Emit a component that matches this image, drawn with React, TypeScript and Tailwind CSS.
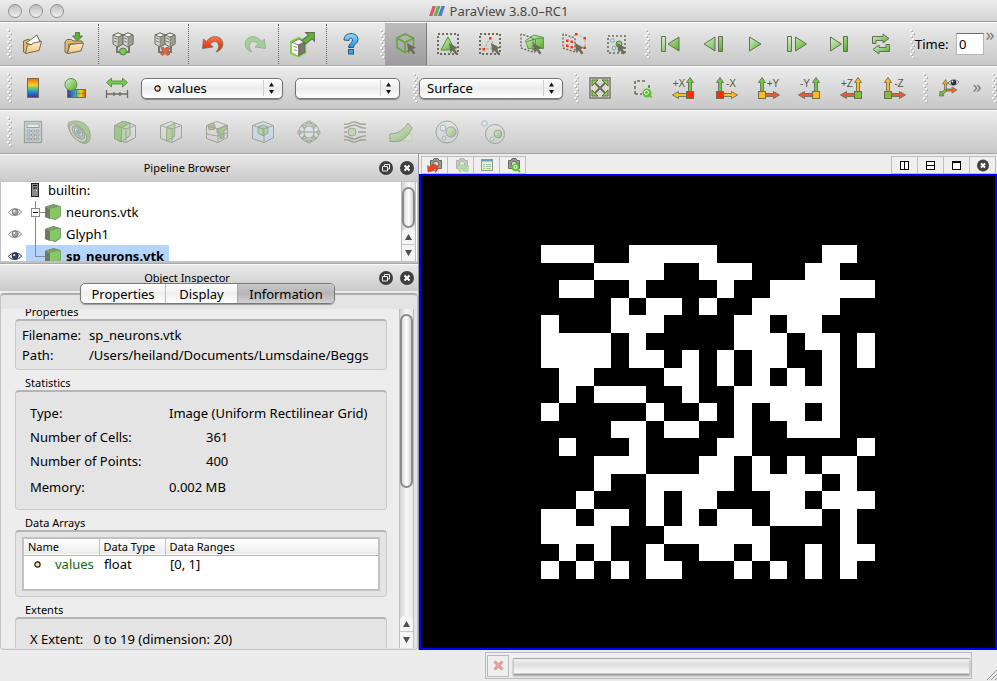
import React from "react";

const OUT = "#6b6d58";

/* ---------- shared building blocks ---------- */

type IconProps = { children: React.ReactNode; className?: string };

function Icon({ children, className = "h-6 w-6" }: IconProps) {
  return (
    <svg viewBox="0 0 24 24" className={className} fill="none" stroke={OUT} strokeWidth="1" aria-hidden="true">
      {children}
    </svg>
  );
}

function ToolButton({
  label,
  children,
  active = false,
  faded = false,
}: {
  label: string;
  children: React.ReactNode;
  active?: boolean;
  faded?: boolean;
}) {
  return (
    <button
      type="button"
      aria-label={label}
      aria-pressed={active || undefined}
      className={
        "flex h-full w-[42px] shrink-0 items-center justify-center " +
        (active ? "border-r border-[#7d7d7d] bg-linear-to-b from-[#bdbdbd] to-[#9d9d9d]" : "")
      }
    >
      <span className={faded ? "opacity-50" : ""}>{children}</span>
    </button>
  );
}

function Grip() {
  return (
    <span className="flex h-full w-[13px] shrink-0 items-center justify-end">
      <svg viewBox="0 0 6 30" className="h-[30px] w-[6px]" aria-hidden="true">
        {Array.from({ length: 10 }, (_, i) => {
          const x = i % 2 === 0 ? 1 : 3;
          return (
            <g key={i}>
              <rect x={x + 1} y={i * 3 + 1} width="2" height="2" fill="#b4b4b4" />
              <rect x={x} y={i * 3} width="2" height="2" fill="#f6f6f6" />
            </g>
          );
        })}
      </svg>
    </span>
  );
}

function Separator() {
  return (
    <span className="flex h-full w-[6px] shrink-0 py-px pl-[2px]">
      <span className="h-full border-l border-dotted border-[#666]" />
    </span>
  );
}

function Toolbar({ children }: { children: React.ReactNode }) {
  return (
    <div
      role="toolbar"
      className="flex h-11 shrink-0 items-center overflow-hidden border-t border-b border-t-white border-b-[#a5a5a5] bg-linear-to-b from-[#ebebeb] to-[#c8c8c8]"
    >
      {children}
    </div>
  );
}

function Popup({
  label,
  options,
  width,
  point = false,
}: {
  label: string;
  options: string[];
  width: string;
  point?: boolean;
}) {
  return (
    <div className={"relative h-[21px] shrink-0 " + width}>
      <select
        aria-label={label}
        className={
          "block h-[21px] w-full appearance-none rounded-[5px] border border-[#747474] bg-linear-to-b from-white via-[#ececec] to-white py-0 pr-6 text-[13px] leading-[19px] text-black shadow-[0_1px_1px_rgba(0,0,0,0.35)] " +
          (point ? "pl-[26px]" : "pl-[7px]")
        }
      >
        {options.map((o) => (
          <option key={o}>{o}</option>
        ))}
      </select>
      <svg viewBox="0 0 20 20" className="pointer-events-none absolute top-0 right-0 h-5 w-5" aria-hidden="true">
        <path d="M0.500 2v16" stroke="#d0d0d0" />
        <path d="M6 8.500L8.500 4.500L11 8.500zM6 12L8.500 16L11 12z" fill="#111" />
      </svg>
      {point && (
        <svg viewBox="0 0 8 8" className="pointer-events-none absolute top-[7px] left-[13px] h-[7px] w-[7px]" aria-hidden="true">
          <circle cx="4" cy="4" r="3" fill="#fbd9a8" stroke="#111" strokeWidth="1.300" />
        </svg>
      )}
    </div>
  );
}

/* ---------- icon parts ---------- */

function Pointer() {
  return <path d="M13 11L22 16L18.500 17L21.500 21L19.500 22.500L16.500 18.500L14.500 21.500Z" fill={OUT} stroke="none" />;
}

function DashedBox() {
  return <rect x="2" y="2" width="20" height="20" stroke={OUT} strokeWidth="2" strokeDasharray="2 2" />;
}

function Folder() {
  return (
    <>
      <path d="M2 10V20L4.500 21.500L6 12H19V9L10 9L8.500 7.500H4Z" fill="#e9b765" />
      <path d="M4.500 21.500L7 12.500L20.500 11L18 19Z" fill="url(#folder)" />
    </>
  );
}

function Server({ x }: { x: number }) {
  return (
    <g>
      <path d={`M${x} 3L${x + 5} 1L${x + 10} 3V12L${x + 5} 15L${x} 12Z`} fill="#d8d8d4" />
      <path d={`M${x} 3L${x + 5} 5L${x + 10} 3L${x + 5} 1Z`} fill="#fafafa" />
      <path d={`M${x + 5} 5L${x + 10} 3V12L${x + 5} 15Z`} fill="#9c9c92" strokeWidth="0.600" />
      <path d={`M${x + 1} 6l3 1.200M${x + 1} 9l3 1.200`} stroke="#777" />
    </g>
  );
}

function ServerPair({ children }: { children: React.ReactNode }) {
  return (
    <Icon>
      <path d="M6 14V20H18V14" stroke="#77776c" strokeWidth="2" />
      <Server x={2} />
      <Server x={12} />
      {children}
    </Icon>
  );
}

/* Wire-frame box seen from above; filters draw their own solid inside it. */
function WireCube({ fill = "none", children }: { fill?: string; children?: React.ReactNode }) {
  return (
    <Icon>
      <path d="M1.500 5.500L12 1.500L22.500 5.500V17.500L13 22.500L1.500 18.500Z" fill={fill} />
      {children}
      <path d="M1.500 5.500L13 9L22.500 5.500M13 9V22.500" />
    </Icon>
  );
}

type Axis = { sign: string; right: boolean; up: string; side: string; box: string };

function AxisIcon({ sign, right, up, side, box }: Axis) {
  const arrows = (
    <>
      <path d="M16.500 16V6.500H14.500L18 1.500L21.500 6.500H19.500V16Z" fill={up} strokeWidth="0.900" />
      <path d="M15 17.500H6.500V15.500L0.500 19L6.500 22.500V20.500H15Z" fill={side} strokeWidth="0.900" />
      <rect x="14.500" y="15.500" width="7" height="7" fill={box} />
    </>
  );
  return (
    <Icon>
      {right ? <g transform="translate(24 0) scale(-1 1)">{arrows}</g> : arrows}
      <text
        x={right ? 17 : 7}
        y="11"
        textAnchor="middle"
        fontSize="10"
        fill="#555546"
        stroke="none"
        fontFamily="Liberation Sans, Noto Sans, sans-serif"
      >
        {sign}
      </text>
    </Icon>
  );
}

const G = "#72c846";
const Y = "#fdbe1c";
const R = "#f9562f";

const axes: Axis[] = [
  { sign: "+X", right: false, up: G, side: Y, box: "#ff2c00" },
  { sign: "-X", right: true, up: G, side: Y, box: "#ff2c00" },
  { sign: "+Y", right: true, up: G, side: R, box: "#fdbe1c" },
  { sign: "-Y", right: false, up: G, side: R, box: "#fdbe1c" },
  { sign: "+Z", right: false, up: Y, side: R, box: "#82bd3b" },
  { sign: "-Z", right: true, up: Y, side: R, box: "#82bd3b" },
];

function Undo({ fill, flip = false }: { fill: string; flip?: boolean }) {
  return (
    <Icon>
      <g transform={flip ? "translate(24 0) scale(-1 1)" : undefined}>
        <path
          d="M2.500 7L1.500 16.500L12 15L9 12.500C11 9 15.500 8.500 17 11.500C18.500 14.500 17.500 17.500 15 20C20 18.500 23 14.500 21.500 9.500C19.500 3.500 10 2.500 5.500 9.500Z"
          fill={fill}
          strokeWidth="0.800"
        />
      </g>
    </Icon>
  );
}

function Eye({ dim = false }: { dim?: boolean }) {
  return (
    <svg viewBox="0 0 14 12" className={dim ? "h-3 w-[14px] opacity-60" : "h-3 w-[14px]"} fill="none" aria-hidden="true">
      <path d="M0.500 6.500C3 2 10.500 1.500 13.500 6C10.500 10.500 3.500 10.500 0.500 6.500Z" fill="#eee" stroke="#333" />
      <circle cx="7.200" cy="5.800" r="3" fill={dim ? "#666" : "#234a86"} stroke="#222" />
      <circle cx="6.200" cy="5" r="1" fill="#fff" />
    </svg>
  );
}

function SourceCube() {
  return (
    <svg viewBox="0 0 16 16" className="h-4 w-4 shrink-0" aria-hidden="true">
      <path d="M0.500 3L8.500 0.500L15.500 2.500V12L10.500 15.500L0.500 13Z" fill="#86c766" stroke="#55734a" strokeWidth="0.800" />
      <path d="M0.500 3L5 5V15L0.500 13Z" fill="#6f7a60" />
      <path d="M0.500 3L8.500 0.500L15.500 2.500L5 5Z" fill="#7d9c69" />
      <path d="M5 5L15.500 2.500V12L5 15Z" fill="#86c766" />
    </svg>
  );
}

/* ---------- toolbars ---------- */

function MainToolbar() {
  return (
    <Toolbar>
      <span className="-ml-px flex h-full">
        <Grip />
      </span>
      <ToolButton label="Open">
        <Icon>
          <path d="M2.500 9V20L4.500 21.500L19 11V8L9 9L7.500 7Z" fill="#e9b765" />
          <path d="M5 11L16 3L19 10L18 15Z" fill="#fff" />
          <path d="M4.500 21.500L6.500 13L11 12.500L12 11L20.500 9.500L18 18.500Z" fill="url(#folder)" />
        </Icon>
      </ToolButton>
      <ToolButton label="Save data">
        <Icon>
          <Folder />
          <path d="M12.500 0.500H16.500V4H19.500L14.500 9L9.500 4H12.500Z" fill="#58b52e" />
        </Icon>
      </ToolButton>
      <Separator />
      <ToolButton label="Connect">
        <ServerPair>
          <circle cx="12" cy="19.500" r="3.500" fill="#6fd04c" />
        </ServerPair>
      </ToolButton>
      <ToolButton label="Disconnect">
        <ServerPair>
          <path d="M8 16L10 15L12 17.500L14 15L17 16.500L14.500 19.500L17 22L14.500 23.500L12 21.500L9.500 23.500L7.500 22L10 19.500Z" fill="#f45b40" strokeWidth="0.800" />
        </ServerPair>
      </ToolButton>
      <Separator />
      <ToolButton label="Undo">
        <Undo fill="url(#red)" />
      </ToolButton>
      <ToolButton label="Redo" faded>
        <Undo fill="#6dc65a" flip />
      </ToolButton>
      <Separator />
      <ToolButton label="Export scene">
        <Icon className="h-[26px] w-[26px]">
          <path d="M1 10L8 6.500L14 9.500V20L8 23.500L1 20.500Z" fill="#dcdcd6" stroke="#7fd04a" strokeWidth="2" />
          <path d="M2 10.500L8 13V22.500L2 19.500Z" fill="#fff" stroke="none" />
          <path d="M2 10.500L8 7.500L13.500 10L8 13Z" fill="#f2f2ee" strokeWidth="0.800" />
          <path d="M8 13L13.500 10.500V19.500L8 22.500Z" fill="#77776d" />
          <path d="M3.500 14l3 1.200M3.500 17l3 1.200" stroke="#999" />
          <path d="M11 8.500L17 4L14.500 1.500H22.500V9.500L20.500 7L14.500 12Z" fill="#5cb82f" />
        </Icon>
      </ToolButton>
      <Separator />
      <ToolButton label="Help">
        <Icon>
          <path d="M5 8C5 4 8 1.500 12 1.500C16 1.500 19 4 19 7.500C19 11.500 14.500 12 14.500 15.500H9.500C9.500 11.500 13.500 11 13.500 8C13.500 5.500 10 5.500 10 8.500Z" fill="url(#blue)" stroke="#33566f" />
          <rect x="9.500" y="17.500" width="5" height="4.500" fill="#29a8ee" stroke="#33566f" />
        </Icon>
      </ToolButton>
      <Grip />
      <ToolButton label="Interact" active>
        <Icon>
          <path d="M11 2L19.500 6V15.500L11 20.500L3 15.500V6ZM3 6L11 10.500L19.500 6M11 10.500V20" stroke="#62a73b" strokeWidth="1.600" />
          <Pointer />
        </Icon>
      </ToolButton>
      <ToolButton label="Select cells on">
        <Icon>
          <DashedBox />
          <path d="M12 5L19 18H5Z" fill="url(#green)" stroke="#5a8f41" />
          <Pointer />
        </Icon>
      </ToolButton>
      <ToolButton label="Select points on">
        <Icon>
          <DashedBox />
          <path d="M12 6L18 17H6Z" strokeDasharray="2 2" stroke="#7ba563" />
          <path d="M11 5h2.500v2.500h-2.500zM4.500 16h2.500v2.500h-2.500zM17 16h2.500v2.500h-2.500z" fill="#ff3210" stroke="none" />
          <Pointer />
        </Icon>
      </ToolButton>
      <ToolButton label="Select cells through">
        <Icon>
          <path d="M5.500 8.500L14 3L23.500 5.500V16.500L8 16.500Z" fill="url(#green)" stroke="#4d8a3a" strokeWidth="0.800" />
          <path d="M6 10L15.500 7L23 6M15.500 7V16.500" stroke="#4d8a3a" strokeWidth="0.800" />
          <path d="M1 2V16L13 20V6L1 2" strokeWidth="1.400" strokeDasharray="2 1.500" />
          <Pointer />
        </Icon>
      </ToolButton>
      <ToolButton label="Select points through">
        <Icon>
          <path d="M1 2V16L13 20V6L1 2" strokeWidth="1.400" strokeDasharray="2 1.500" />
          <path d="M14 2L23 6V17M5 9L14 2M5 15L14 14" strokeDasharray="2 2" stroke="#8d8d80" strokeWidth="0.700" />
          <path d="M13 1h2.500v2.500h-2.500zM21.500 5h2.500v2.500h-2.500zM21.500 14.500h2.500v2.500h-2.500zM4 7.500h2.500v2.500h-2.500zM4 12.500h2.500v2.500h-2.500zM8.500 8.500h2.500v2.500h-2.500zM8.500 14h2.500v2.500h-2.500z" fill="#ff3210" stroke="none" />
          <Pointer />
        </Icon>
      </ToolButton>
      <ToolButton label="Select block">
        <Icon>
          <rect x="4" y="4" width="17" height="17" strokeWidth="1.600" strokeDasharray="2 2" />
          <circle cx="8.500" cy="8.500" r="1.800" fill="#d9ebf5" stroke="#7f9dac" />
          <circle cx="10" cy="16" r="1.800" fill="#d9ebf5" stroke="#7f9dac" />
          <circle cx="15" cy="12" r="3" fill="#8ed373" stroke="#4d8a3a" />
          <Pointer />
        </Icon>
      </ToolButton>
      <Grip />
      <ToolButton label="First frame">
        <Icon>
          <path d="M2.500 4.500h4v15h-4zM20 5V19L9 12Z" fill="url(#green)" />
        </Icon>
      </ToolButton>
      <ToolButton label="Previous frame">
        <Icon>
          <path d="M17.500 4.500h4v15h-4zM14 5V19L3 12Z" fill="url(#green)" />
        </Icon>
      </ToolButton>
      <ToolButton label="Play">
        <Icon>
          <path d="M6.500 5V19L18 12Z" fill="url(#green)" />
        </Icon>
      </ToolButton>
      <ToolButton label="Next frame">
        <Icon>
          <path d="M2.500 4.500h4v15h-4zM10.500 5V19L21.500 12Z" fill="url(#green)" />
        </Icon>
      </ToolButton>
      <ToolButton label="Last frame">
        <Icon>
          <path d="M16.500 4.500h4v15h-4zM3.500 5V19L14.500 12Z" fill="url(#green)" />
        </Icon>
      </ToolButton>
      <ToolButton label="Loop">
        <Icon>
          <path d="M3.500 11.500V4.500H14V2L20 6.500L14 11V8.500H7V11.500Z" fill="url(#green)" />
          <path d="M20.500 12.500V19.500H10V22L4 17.500L10 13V15.500H17V12.500Z" fill="url(#green)" />
        </Icon>
      </ToolButton>
      <Grip />
      <label htmlFor="time" className="w-[37px] shrink-0 text-[13px] leading-4">
        Time:
      </label>
      <input
        id="time"
        defaultValue="0"
        className="ml-1 h-[22px] w-7 shrink-0 border border-[#b5b5b5] border-t-[#6f6f6f] bg-white px-[2px] text-[13px] leading-4 outline-none"
      />
      <button type="button" aria-label="More tools" className="-mt-5 w-3 shrink-0 text-[18px] leading-6 text-[#7c7c7c]">
        »
      </button>
    </Toolbar>
  );
}

function DisplayToolbar() {
  return (
    <Toolbar>
      <span className="-ml-px flex h-full">
        <Grip />
      </span>
      <ToolButton label="Color legend">
        <Icon>
          <rect x="6.500" y="2.500" width="11" height="19" fill="url(#rainbowV)" />
        </Icon>
      </ToolButton>
      <ToolButton label="Edit color map">
        <Icon>
          <rect x="4.500" y="13.500" width="18" height="8" fill="url(#rainbowH)" />
          <path d="M4.500 17.500h18M13.500 13.500v8" strokeWidth="0.600" />
          <circle cx="8" cy="8.500" r="6" fill="url(#green)" stroke="#5e8c4e" />
        </Icon>
      </ToolButton>
      <ToolButton label="Rescale range">
        <Icon>
          <path d="M1.500 6.500L6.500 2V5H17.500V2L22.500 6.500L17.500 11V8H6.500V11Z" fill="#78c951" stroke="#5f9440" />
          <path d="M1.500 14v8M22.500 14v8M1.500 18h21M9 16v4M15 16v4" strokeWidth="1.300" />
        </Icon>
      </ToolButton>
      <div className="ml-[3px] flex gap-3">
        <Popup label="Color by" options={["values"]} width="w-[142px]" point />
        <Popup label="Component" options={[""]} width="w-[105px]" />
      </div>
      <span className="ml-[5px] flex h-full">
        <Grip />
      </span>
      <span className="ml-px flex">
        <Popup label="Representation" options={["Surface", "Wireframe", "Points"]} width="w-[144px]" />
      </span>
      <span className="ml-[3px] flex h-full">
        <Grip />
      </span>
      <ToolButton label="Reset camera">
        <Icon>
          <rect x="2" y="2" width="20" height="20" fill="#d9d9ce" stroke="#8f8f80" strokeWidth="2" />
          <path d="M6 6L18 18M18 6L6 18" strokeWidth="2" />
          <path d="M4 4H10L4 10ZM20 4H14L20 10ZM4 20H10L4 14ZM20 20H14L20 14Z" fill="#8bcf5e" stroke="#59733f" />
        </Icon>
      </ToolButton>
      <ToolButton label="Zoom to box">
        <Icon>
          <path d="M5 18V5H17M19 9V13M5 18H12" strokeWidth="1.600" strokeDasharray="3 2" />
          <circle cx="17" cy="17" r="4.500" fill="#5dc136" stroke="none" />
          <circle cx="16.500" cy="16.500" r="2" stroke="#fff" />
          <path d="M18 18L21.500 21.500" stroke="#5dc136" strokeWidth="2" />
        </Icon>
      </ToolButton>
      {axes.map((a) => (
        <ToolButton key={a.sign} label={"View " + a.sign}>
          <AxisIcon {...a} />
        </ToolButton>
      ))}
      <Grip />
      <ToolButton label="Show orientation axes">
        <Icon>
          <path d="M7.500 15V8H5.500L8.500 3.500L11.500 8H9.500V15Z" fill="#e6ab35" strokeWidth="0.700" />
          <path d="M9 13H15V11L20 14L15 17V15H9Z" fill="#f45f35" strokeWidth="0.700" />
          <path d="M8 13L10 15L6 18L7 20L2.500 20L3 15L5 16Z" fill="#71b84d" strokeWidth="0.700" />
          <path d="M11 7C14 3 19 3 22 6C19 10 14 10 11 7Z" fill="#dfe5ee" strokeWidth="0.800" />
          <circle cx="16.500" cy="6.500" r="2.800" fill="#1f3157" stroke="none" />
          <circle cx="15.500" cy="5.500" r="0.900" fill="#fff" stroke="none" />
        </Icon>
      </ToolButton>
      <button type="button" aria-label="More display tools" className="-mt-1 w-[14px] shrink-0 text-[18px] leading-6 text-[#7c7c7c]">
        »
      </button>
      <Grip />
    </Toolbar>
  );
}

function FilterToolbar() {
  return (
    <Toolbar>
      <span className="-ml-px flex h-full">
        <Grip />
      </span>
      <div className="flex h-full gap-1">
        <ToolButton label="Calculator" faded>
          <Icon>
            <rect x="3.500" y="1.500" width="17" height="21" fill="#b9d3e8" strokeWidth="1.300" />
            <rect x="6" y="4" width="12" height="3.500" fill="#f0f4f7" />
            <path d="M6 10h3v2H6zM10.500 10h3v2h-3zM15 10h3v2h-3zM6 14h3v2H6zM10.500 14h3v2h-3zM15 14h3v2h-3zM6 18h3v2H6zM10.500 18h3v2h-3zM15 18h3v2h-3z" fill="#f0f4f7" />
          </Icon>
        </ToolButton>
        <ToolButton label="Contour" faded>
          <Icon>
            <path d="M1 3.500C4 0 14 0 19 5C24 10 25 20 20 23C13 26 0 12 1 3.500Z" fill="#74b751" />
            <ellipse cx="11" cy="13" rx="11" ry="6" transform="rotate(48 11 13)" fill="#b8dba3" />
            <ellipse cx="11.500" cy="12.500" rx="8" ry="4.300" transform="rotate(48 11.500 12.500)" fill="#79b6dd" />
            <ellipse cx="11.500" cy="12" rx="5" ry="2.600" transform="rotate(48 11.500 12)" fill="#dcecf6" />
            <ellipse cx="11.500" cy="12" rx="2.500" ry="1.300" transform="rotate(48 11.500 12)" fill="#5689bd" />
          </Icon>
        </ToolButton>
        <ToolButton label="Clip" faded>
          <WireCube>
            <path d="M1.500 6L9 1.500L17 3L9 7.500L8 22L1.500 18.500Z" fill="#6bb443" stroke="#4e7a44" />
            <path d="M9 7.500L17 3V15.500L8 22Z" fill="#9bd37c" stroke="#4e7a44" />
            <path d="M1.500 6L9 7.500" stroke="#4e7a44" />
          </WireCube>
        </ToolButton>
        <ToolButton label="Slice" faded>
          <WireCube>
            <path d="M8 7L16 3L15.500 16.500L7.500 21Z" fill="#8dce68" stroke="#4e7a44" />
          </WireCube>
        </ToolButton>
        <ToolButton label="Threshold" faded>
          <WireCube>
            <path d="M3 5L8 3L10 5V9L4 10Z" fill="#6bb443" />
            <path d="M12 9L22 5V9L19 11V18L15 19V13L12 13Z" fill="#6bb443" />
            <path d="M2 14L12 16L22 13" />
          </WireCube>
        </ToolButton>
        <ToolButton label="Extract subset" faded>
          <WireCube fill="#bcd8ec">
            <path d="M12 5L17 7V13L12 16L7 13V7Z" fill="#8dce68" stroke="#4e7a44" />
            <path d="M7 7L12 9.500L17 7M12 9.500V16" stroke="#4e7a44" />
          </WireCube>
        </ToolButton>
        <ToolButton label="Glyph" faded>
          <Icon>
            <circle cx="12" cy="12" r="10" fill="#d5e7f2" />
            <ellipse cx="12" cy="12" rx="5" ry="10" />
            <path d="M2 12H22M4 6H20M4 18H20" />
            <path d="M1 11h3v3H1zM20 11h3v3h-3zM10.500 1h3v3h-3zM10.500 20h3v3h-3zM6 5h3v3H6zM15 5h3v3h-3zM6 16h3v3H6zM15 16h3v3h-3z" fill="#8dce68" strokeWidth="0.800" />
          </Icon>
        </ToolButton>
        <ToolButton label="Stream tracer" faded>
          <Icon>
            <path d="M1 4C6 6 8 1 12 2S17 5 23 4M1 8C5 8 7 5 11 5S18 9 23 8M1 16C5 16 7 19 11 19S18 15 23 16M1 20C6 18 8 23 12 22S17 19 23 20M15 12H23M1 12H4" strokeWidth="1.400" />
            <circle cx="9" cy="12" r="4" fill="#a6d98a" />
          </Icon>
        </ToolButton>
        <ToolButton label="Warp" faded>
          <Icon>
            <path d="M1 14H23V21H1Z" fill="#cfe3c3" stroke="#b6c7ad" />
            <path d="M1 14C10 14 15 9 19 3L23 8C20 15 15 20 9 21.500H1Z" fill="url(#green)" />
          </Icon>
        </ToolButton>
        <ToolButton label="Group datasets" faded>
          <Icon>
            <circle cx="12" cy="12" r="11" />
            <circle cx="8" cy="8" r="3" fill="#d7eaf4" stroke="#7393a5" />
            <circle cx="9" cy="18" r="2" fill="#d7eaf4" stroke="#7393a5" />
            <circle cx="16" cy="12" r="5" fill="url(#green)" />
          </Icon>
        </ToolButton>
        <ToolButton label="Extract level" faded>
          <Icon>
            <circle cx="14" cy="14" r="9.500" />
            <circle cx="3.500" cy="3.500" r="2.800" fill="#d7eaf4" stroke="#7393a5" />
            <circle cx="11" cy="19" r="2" fill="#d7eaf4" stroke="#7393a5" />
            <circle cx="17" cy="14" r="4" fill="url(#green)" />
          </Icon>
        </ToolButton>
      </div>
    </Toolbar>
  );
}

/* ---------- left column ---------- */

function DockButton({ label, close = false }: { label: string; close?: boolean }) {
  return (
    <button type="button" aria-label={label} className="block h-[14px] w-[14px]">
      <svg viewBox="0 0 14 14" className="h-[14px] w-[14px]" fill="none" aria-hidden="true">
        <circle cx="7" cy="7" r="7" fill="#3f3f3f" />
        {close ? (
          <path d="M4.500 4.500L9.500 9.500M9.500 4.500L4.500 9.500" stroke="#fff" strokeWidth="2" />
        ) : (
          <path d="M5.500 5.500V3.500H10.500V8H8.500M3.500 5.500H8.500V10H3.500Z" stroke="#eee" />
        )}
      </svg>
    </button>
  );
}

function DockTitle({ title }: { title: string }) {
  return (
    <div className="grid h-[27px] shrink-0 grid-cols-[44px_1fr_44px] items-center border-t border-[#f8f8f8] bg-linear-to-b from-[#e8e8e8] to-[#cbcbcb] pb-px">
      <h2 className="col-start-2 pr-11 text-center text-[11px] leading-4">{title}</h2>
      <div className="flex justify-end gap-[7px] pr-1">
        <DockButton label={"Float " + title} />
        <DockButton label={"Close " + title} close />
      </div>
    </div>
  );
}

function ScrollBar({ thumb }: { thumb: string }) {
  return (
    <div className="flex w-[15px] shrink-0 flex-col border-x border-[#bdbdbd] bg-linear-to-r from-[#d2d2d2] via-[#f6f6f6] to-[#e8e8e8]">
      <div className="min-h-0 flex-1 pt-[5px]">
        <div
          className={
            "w-full rounded-[7px] border-2 border-[#8b8b8b] bg-linear-to-r from-[#dadada] via-white to-[#d2d2d2] " + thumb
          }
        />
      </div>
      <button type="button" aria-label="Scroll up" className="flex h-4 w-full items-center justify-center rounded-t border-b border-[#c8c8c8] bg-[#f4f4f4]">
        <svg viewBox="0 0 8 8" className="h-[7px] w-[7px]" aria-hidden="true">
          <path d="M0 8L4 1L8 8Z" fill="#505050" />
        </svg>
      </button>
      <button type="button" aria-label="Scroll down" className="flex h-4 w-full items-center justify-center bg-[#f4f4f4]">
        <svg viewBox="0 0 8 8" className="h-[7px] w-[7px]" aria-hidden="true">
          <path d="M0 0L4 7L8 0Z" fill="#505050" />
        </svg>
      </button>
    </div>
  );
}

function TreeRow({
  name,
  eye,
  branch,
  selected = false,
}: {
  name: string;
  eye: React.ReactNode;
  branch: React.ReactNode;
  selected?: boolean;
}) {
  return (
    <li className="flex h-[22px] items-center">
      <span className="flex w-[25px] justify-center pl-[2px]">{eye}</span>
      <span className={"flex h-full items-center " + (selected ? "bg-[#b4d5ff] pr-[5px] font-bold" : "")}>
        <svg viewBox="0 0 19 22" className="h-[22px] w-[19px] shrink-0" fill="none" stroke="#8a8a8a" shapeRendering="crispEdges" aria-hidden="true">
          {branch}
        </svg>
        <SourceCube />
        <span className="pl-[5px]">{name}</span>
      </span>
    </li>
  );
}

function PipelineBrowser() {
  return (
    <section className="flex shrink-0 flex-col">
      <DockTitle title="Pipeline Browser" />
      <div className="flex h-[82px] border border-b-2 border-[#c2c2c2] bg-white pr-px">
        <ul className="-mt-[3px] h-[82px] flex-1 overflow-hidden text-[13px] leading-4">
          <li className="flex h-[22px] items-center">
            <svg viewBox="0 0 8 14" className="ml-[30px] h-[14px] w-2" aria-hidden="true">
              <rect x="0.500" y="0.500" width="7" height="13" fill="#8b8b8b" stroke="#222" />
              <path d="M2 2.500h4M2 5h4" stroke="#111" />
              <rect x="5" y="7" width="1" height="1" fill="#fff" />
            </svg>
            <span className="pl-[9px]">builtin:</span>
          </li>
          <TreeRow
            name="neurons.vtk"
            eye={<Eye dim />}
            branch={
              <>
                <path d="M9.500 0V22M13 11.500H19" />
                <rect x="5.500" y="7.500" width="8" height="8" fill="#fff" />
                <path d="M7 11.500H12" stroke="#111" />
              </>
            }
          />
          <TreeRow name="Glyph1" eye={<Eye dim />} branch={<path d="M9.500 0V22" />} />
          <TreeRow name="sp_neurons.vtk" eye={<Eye />} selected branch={<path d="M9.500 0V11.500H19" />} />
        </ul>
        <ScrollBar thumb="h-[41px]" />
      </div>
    </section>
  );
}

function Group({ title, className, children }: { title: string; className: string; children: React.ReactNode }) {
  return (
    <section>
      <h3 className="pl-[10px] text-[11px] leading-[14px]">{title}</h3>
      <div className={"rounded-[4px] border border-t-2 border-[#cacaca] border-t-[#b4b4b4] bg-[#e4e4e4] " + className}>{children}</div>
    </section>
  );
}

const stats = [
  { label: "Type:", value: "Image (Uniform Rectilinear Grid)", row: "h-6", cell: "" },
  { label: "Number of Cells:", value: "361", row: "h-6", cell: "pl-[37px]" },
  { label: "Number of Points:", value: "400", row: "h-6", cell: "pl-[37px]" },
  { label: "Memory:", value: "0.002 MB", row: "h-7", cell: "" },
];

function ObjectInspector() {
  const tab = "text-center text-[13px] leading-[18px]";
  return (
    <section className="flex min-h-0 flex-1 flex-col border-t border-[#a8a8a8]">
      <DockTitle title="Object Inspector" />
      <div role="tablist" className="relative z-10 -mt-2 ml-20 flex h-[21px] w-[255px] overflow-hidden rounded-[5px] border border-[#787878] bg-linear-to-b from-white via-[#efefef] to-white shadow-[0_1px_1px_rgba(0,0,0,0.3)]">
        <button type="button" role="tab" className={tab + " flex-1 border-r border-[#bdbdbd]"}>
          Properties
        </button>
        <button type="button" role="tab" className={tab + " w-[71px]"}>
          Display
        </button>
        <button type="button" role="tab" aria-selected="true" className={tab + " w-[97px] border-l border-[#a8a8a8] bg-linear-to-b from-[#c9c9c9] via-[#b5b5b5] to-[#d2d2d2]"}>
          Information
        </button>
      </div>
      <div className="-mt-[11px] flex min-h-0 flex-1 flex-col rounded-[4px] border border-t-2 border-[#c4c4c4] border-t-[#adadad] bg-[#e4e4e4] pt-[14px] pr-[3px] pb-px">
        <div className="flex min-h-0 flex-1 bg-[#ededed]">
          <div className="min-h-0 min-w-0 flex-1 overflow-hidden pr-3 pl-[14px] text-[13px] leading-4">
            <div className="-mt-1 flex flex-col gap-[6px]">
              <Group title="Properties" className="px-[6px] pt-1 pb-1">
                <dl className="grid grid-cols-[67px_1fr] leading-5">
                  <dt>Filename:</dt>
                  <dd>sp_neurons.vtk</dd>
                  <dt>Path:</dt>
                  <dd className="whitespace-nowrap">/Users/heiland/Documents/Lumsdaine/Beggs</dd>
                </dl>
              </Group>
              <Group title="Statistics" className="pt-[9px] pr-1 pb-2 pl-[14px]">
                <dl>
                  {stats.map((s) => (
                    <div key={s.label} className={"flex items-center " + s.row}>
                      <dt className="w-[139px] shrink-0">{s.label}</dt>
                      <dd className={"whitespace-nowrap " + s.cell}>{s.value}</dd>
                    </div>
                  ))}
                </dl>
              </Group>
              <Group title="Data Arrays" className="px-[6px] pt-[5px] pb-[5px]">
                <div className="h-[54px] border-2 border-[#c2c2c2] bg-white">
                  <table className="w-full table-fixed border-collapse text-left">
                    <thead className="border-b border-[#b5b5b5] bg-linear-to-b from-white to-[#ececec] text-[11px] leading-[14px]">
                      <tr className="h-4">
                        <th className="w-[75px] border-r border-[#c2c2c2] pl-1 font-normal">Name</th>
                        <th className="w-[66px] border-r border-[#c2c2c2] pl-1 font-normal whitespace-nowrap">Data Type</th>
                        <th className="pl-1 font-normal">Data Ranges</th>
                      </tr>
                    </thead>
                    <tbody>
                      <tr className="h-[18px]">
                        <td className="text-[#0b6a0b]">
                          <span className="flex items-center gap-[14px] pl-[10px]">
                            <svg viewBox="0 0 8 8" className="h-[7px] w-[7px]" aria-hidden="true">
                              <circle cx="4" cy="4" r="3" fill="#fbd9a8" stroke="#111" strokeWidth="1.300" />
                            </svg>
                            values
                          </span>
                        </td>
                        <td className="pl-[5px]">float</td>
                        <td className="pl-[5px]">[0, 1]</td>
                      </tr>
                    </tbody>
                  </table>
                </div>
              </Group>
              <Group title="Extents" className="px-[14px] pt-3 pb-3">
                <dl className="flex gap-[10px]">
                  <dt>X Extent:</dt>
                  <dd>0 to 19 (dimension: 20)</dd>
                </dl>
              </Group>
            </div>
          </div>
          <ScrollBar thumb="h-[174px]" />
        </div>
      </div>
    </section>
  );
}

/* ---------- render view ---------- */

const cells = [
  "1110011111000000110",
  "0001111001110001100",
  "0110010000100111111",
  "0000101101001111100",
  "1000111000011011000",
  "1111010000011101101",
  "1111011010101100101",
  "0110000110101010100",
  "0101110010011111100",
  "1000001001010110100",
  "0000110110010011100",
  "0100010000110000001",
  "0001110001101010110",
  "0001001111101111010",
  "0010001011000110111",
  "1101101010110111010",
  "1111000111111000010",
  "0101001001101001011",
  "1010101100010101010",
];

function Lattice() {
  return (
    <svg viewBox="0 0 19 19" className="h-[334px] w-[334px]" fill="#fff" shapeRendering="crispEdges" role="img" aria-label="Neuron values">
      {cells.flatMap((row, y) =>
        Array.from(row.matchAll(/1+/g), (m) => (
          <rect key={y + "-" + m.index} x={m.index} y={y} width={m[0].length} height="1" />
        )),
      )}
    </svg>
  );
}

function ViewButton({ label, children, faded = false }: { label: string; children: React.ReactNode; faded?: boolean }) {
  return (
    <button type="button" aria-label={label} className="-ml-px flex h-[18px] w-[27px] items-center justify-center border border-[#bfbfbf] bg-[#efefef]">
      <svg viewBox="0 0 16 16" className={faded ? "h-4 w-4 opacity-45" : "h-4 w-4"} fill="none" stroke="#222" aria-hidden="true">
        {children}
      </svg>
    </button>
  );
}

function Camera() {
  return (
    <>
      <path d="M3.500 3.500H6L7 1.500H11L12 3.500H14.500V11.500H3.500Z" fill="#9a9b8c" stroke="#6b6c60" />
      <circle cx="9" cy="7" r="2.800" fill="#d8d8cf" stroke="#6b6c60" />
    </>
  );
}

function RenderView() {
  return (
    <main className="flex min-w-0 flex-1 flex-col">
      <div className="flex h-5 shrink-0 items-end justify-between bg-[#ededed] pr-px pl-[3px]">
        <div className="flex">
          <ViewButton label="Undo camera">
            <Camera />
            <path d="M0.500 8.500L1 15L8 13.500L6 12C7 10.500 9 11 8.500 15.500C12.500 12 11 7.500 7.500 7.500C5 7.500 3.500 8.500 2.500 10Z" fill="#ee4528" stroke="#a5402e" strokeWidth="0.500" />
          </ViewButton>
          <ViewButton label="Redo camera" faded>
            <Camera />
            <path d="M15.500 8.500L15 15L8 13.500L10 12C9 10.500 7 11 7.500 15.500C3.500 12 5 7.500 8.500 7.500C11 7.500 12.500 8.500 13.500 10Z" fill="#6dc65a" stroke="#4e8e41" strokeWidth="0.500" />
          </ViewButton>
          <ViewButton label="View settings">
            <rect x="2.500" y="2.500" width="11" height="11" fill="#e0f2d8" stroke="#8a9c90" />
            <path d="M3 3.500h10" stroke="#6f9fc0" strokeWidth="2" />
            <path d="M4 7.500h2M7 7.500h5M4 9.500h2M7 9.500h5M4 11.500h2M7 11.500h5" stroke="#9bcb8e" />
          </ViewButton>
          <ViewButton label="Capture view">
            <Camera />
            <circle cx="10.500" cy="10.500" r="3.800" fill="#5dc136" stroke="none" />
            <circle cx="10.500" cy="10" r="1.600" stroke="#fff" />
            <path d="M12.500 12.500L15 15" stroke="#5dc136" strokeWidth="2" />
          </ViewButton>
        </div>
        <div className="flex">
          <ViewButton label="Split horizontally">
            <path d="M3.500 4.500H11.500V12.500H3.500ZM7.500 4.500V12.500" fill="#fff" stroke="#000" shapeRendering="crispEdges" />
          </ViewButton>
          <ViewButton label="Split vertically">
            <path d="M3.500 4.500H11.500V12.500H3.500ZM3.500 8.500H11.500" fill="#fff" stroke="#000" shapeRendering="crispEdges" />
          </ViewButton>
          <ViewButton label="Maximize">
            <path d="M3.500 4.500H11.500V12.500H3.500ZM3.500 5.500H11.500" fill="#fff" stroke="#000" shapeRendering="crispEdges" />
          </ViewButton>
          <ViewButton label="Close view">
            <circle cx="8" cy="8.500" r="6" fill="#444" stroke="none" />
            <path d="M6 6.500L10 10.500M10 6.500L6 10.500" stroke="#fff" strokeWidth="2" />
          </ViewButton>
        </div>
      </div>
      <div className="flex min-h-0 flex-1 items-center justify-center border-2 border-[#0000ff] bg-black">
        <Lattice />
      </div>
    </main>
  );
}

/* ---------- window ---------- */

function TitleBar() {
  return (
    <header className="relative flex h-[22px] shrink-0 items-center justify-center rounded-t-[4px] border-b border-[#9b9b9b] bg-linear-to-b from-[#ececec] to-[#d3d3d3]">
      <div className="absolute left-2 flex gap-[7px]">
        {["Close", "Minimize", "Zoom"].map((b) => (
          <button
            key={b}
            type="button"
            aria-label={b}
            className="h-[14px] w-[14px] rounded-full border border-[#939393] bg-linear-to-b from-[#bdbdbd] to-[#f0f0f0]"
          />
        ))}
      </div>
      <svg viewBox="0 0 16 12" className="h-3 w-4" aria-hidden="true">
        <defs>
          <linearGradient id="green" x1="0" y1="0" x2="1" y2="1">
            <stop offset="0" stopColor="#d9f2cd" />
            <stop offset="1" stopColor="#4fae26" />
          </linearGradient>
          <linearGradient id="folder" x1="0" y1="0" x2="0" y2="1">
            <stop offset="0" stopColor="#fff0cd" />
            <stop offset="1" stopColor="#f3c274" />
          </linearGradient>
          <linearGradient id="red" x1="0" y1="0" x2="0" y2="1">
            <stop offset="0" stopColor="#ff7a5a" />
            <stop offset="0.500" stopColor="#f5401b" />
            <stop offset="1" stopColor="#e03010" />
          </linearGradient>
          <linearGradient id="blue" x1="0" y1="0" x2="0" y2="1">
            <stop offset="0" stopColor="#9ad6f8" />
            <stop offset="1" stopColor="#1298e8" />
          </linearGradient>
          <linearGradient id="rainbowV" x1="0" y1="0" x2="0" y2="1">
            <stop offset="0" stopColor="#f0661f" />
            <stop offset="0.350" stopColor="#f8d01c" />
            <stop offset="0.600" stopColor="#2fb8a8" />
            <stop offset="0.800" stopColor="#2767c8" />
            <stop offset="1" stopColor="#4b2a92" />
          </linearGradient>
          <linearGradient id="rainbowH">
            <stop offset="0" stopColor="#4b2a92" />
            <stop offset="0.250" stopColor="#2276d8" />
            <stop offset="0.500" stopColor="#35c3a0" />
            <stop offset="0.750" stopColor="#f8d01c" />
            <stop offset="1" stopColor="#f0461f" />
          </linearGradient>
        </defs>
        <path d="M3.500 1H7L3.500 11H0Z" fill="#e2566c" />
        <path d="M8 1H11.500L8 11H4.500Z" fill="#5cb848" />
        <path d="M12.500 1H16L12.500 11H9Z" fill="#4a78d8" />
      </svg>
      <h1 className="pl-[5px] text-[13px] leading-4 text-[#4a4a4a]">ParaView 3.8.0–RC1</h1>
    </header>
  );
}

function StatusBar() {
  return (
    <footer className="flex h-[31px] shrink-0 items-start justify-end bg-[#ececec] pt-[2px]">
      <div className="flex h-[27px] w-[487px] items-center border border-[#b9b9b9] bg-[#efefef] pr-px pl-px">
        <button type="button" aria-label="Abort" className="flex h-[22px] w-[22px] shrink-0 items-center justify-center border border-[#b9b9b9]">
          <svg viewBox="0 0 12 12" className="h-[11px] w-[11px]" aria-hidden="true">
            <path d="M1 2.500L3 1L6 4L9 1L11 2.500L8 6L11 9.500L9 11L6 8L3 11L1 9.500L4 6Z" fill="#eda394" stroke="#b7988f" strokeWidth="0.800" />
          </svg>
        </button>
        <div
          role="progressbar"
          aria-label="Progress"
          className="ml-1 h-4 flex-1 border border-t-[#a5a5a5] border-r-[#ccc] border-b-[#c8c8c8] border-l-[#ccc] bg-linear-to-b from-[#f2f2f2] via-[#dedede] via-40% to-[#fbfbfb] shadow-[0_2px_2px_rgba(0,0,0,0.35)]"
        />
      </div>
      <svg viewBox="0 0 25 29" className="h-[29px] w-[25px]" stroke="#8f8f8f" fill="none" aria-hidden="true">
        <path d="M15 28L25 18M19 28L25 22M23 28L25 26" />
      </svg>
    </footer>
  );
}

export default function App() {
  return (
    <div className="flex h-screen min-h-[520px] flex-col overflow-hidden bg-[#ececec] font-['Noto_Sans','Open_Sans',sans-serif] text-black">
      <TitleBar />
      <MainToolbar />
      <DisplayToolbar />
      <FilterToolbar />
      <div className="flex min-h-0 flex-1">
        <aside className="flex w-[419px] shrink-0 flex-col border-r border-[#9a9a9a]">
          <PipelineBrowser />
          <ObjectInspector />
        </aside>
        <RenderView />
      </div>
      <StatusBar />
    </div>
  );
}
